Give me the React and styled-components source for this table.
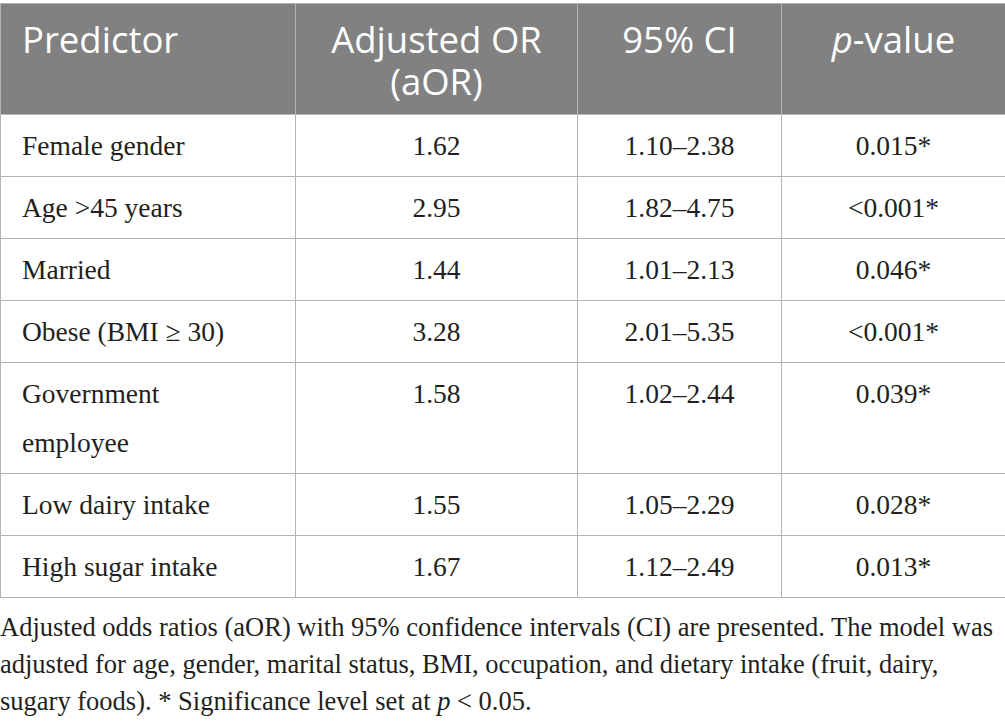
import styled, { createGlobalStyle } from 'styled-components';

const GlobalStyle = createGlobalStyle`
    body {
        margin: 0;
        background: #fff;
    }
`;

const Page = styled.div`
    width: 1005px;
    padding-top: 3px;
`;

const Table = styled.table`
    width: 1005px;
    border-collapse: collapse;
    table-layout: fixed;
`;

const HeadCell = styled.th`
    background: #808180;
    color: #fff;
    font-family: 'Open Sans', sans-serif;
    font-weight: 400;
    font-size: 36.5px;
    line-height: 42px;
    text-align: ${p => (p.$left ? 'left' : 'center')};
    vertical-align: top;
    padding: 14px 21px 12px;
    border: 1.5px solid #b4b4b4;
    height: 110px;
    box-sizing: border-box;

    em {
        font-style: italic;
    }
`;

const Cell = styled.td`
    font-family: 'Liberation Serif', serif;
    font-size: 27.5px;
    line-height: 49px;
    color: #231f20;
    text-align: ${p => (p.$left ? 'left' : 'center')};
    vertical-align: top;
    padding: 6px 21px 6px;
    border: 1.5px solid #b4b4b4;
`;

const Caption = styled.p`
    margin: 11px 0 0;
    font-family: 'Liberation Serif', serif;
    font-size: 26.5px;
    line-height: 37px;
    color: #231f20;
`;

const rows = [
    ['Female gender', '1.62', '1.10–2.38', '0.015*'],
    ['Age >45 years', '2.95', '1.82–4.75', '<0.001*'],
    ['Married', '1.44', '1.01–2.13', '0.046*'],
    ['Obese (BMI ≥ 30)', '3.28', '2.01–5.35', '<0.001*'],
    [<>Government<br />employee</>, '1.58', '1.02–2.44', '0.039*'],
    ['Low dairy intake', '1.55', '1.05–2.29', '0.028*'],
    ['High sugar intake', '1.67', '1.12–2.49', '0.013*'],
];

function App() {
    return (
        <Page>
            <GlobalStyle />
            <Table>
                <colgroup>
                    <col style={{ width: 295 }} />
                    <col style={{ width: 282 }} />
                    <col style={{ width: 204 }} />
                    <col style={{ width: 224 }} />
                </colgroup>
                <thead>
                    <tr>
                        <HeadCell $left>Predictor</HeadCell>
                        <HeadCell>Adjusted OR (aOR)</HeadCell>
                        <HeadCell>95% CI</HeadCell>
                        <HeadCell><em>p</em>-value</HeadCell>
                    </tr>
                </thead>
                <tbody>
                    {rows.map(r => (
                        <tr key={r[1]}>
                            <Cell $left>{r[0]}</Cell>
                            <Cell>{r[1]}</Cell>
                            <Cell>{r[2]}</Cell>
                            <Cell>{r[3]}</Cell>
                        </tr>
                    ))}
                </tbody>
            </Table>
            <Caption>
                Adjusted odds ratios (aOR) with 95% confidence intervals (CI) are presented. The model was
                adjusted for age, gender, marital status, BMI, occupation, and dietary intake (fruit, dairy,
                sugary foods). * Significance level set at <em>p</em> &lt; 0.05.
            </Caption>
        </Page>
    );
}

export default App;
